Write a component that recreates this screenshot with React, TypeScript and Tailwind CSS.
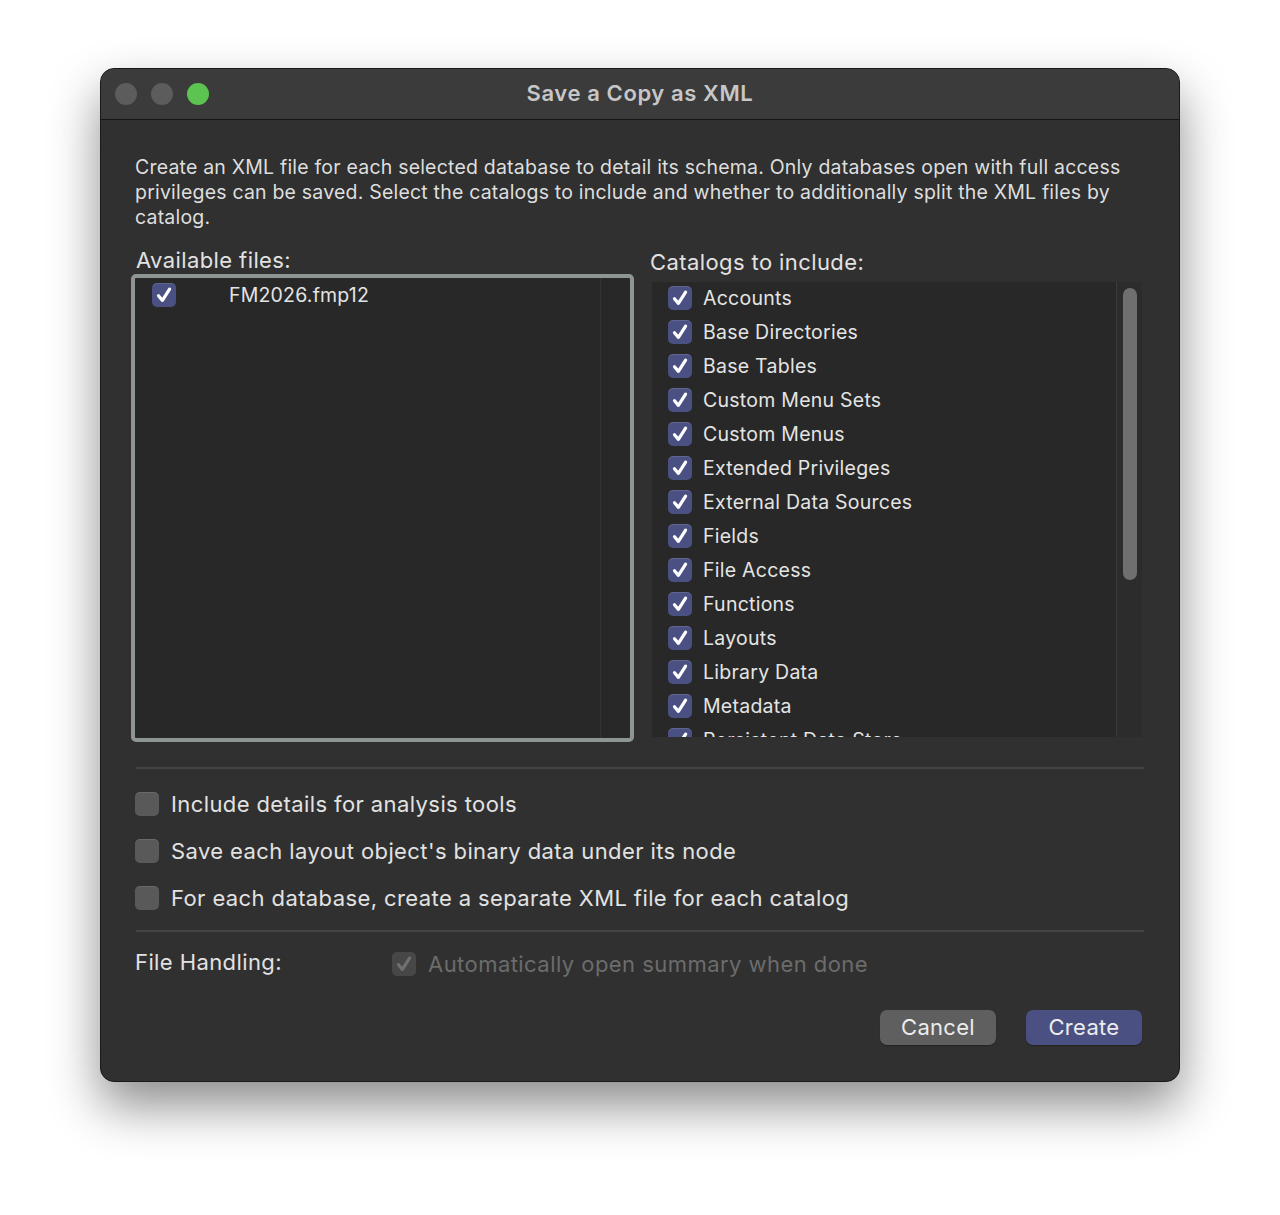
import React from "react";

const catalogs = [
  "Accounts",
  "Base Directories",
  "Base Tables",
  "Custom Menu Sets",
  "Custom Menus",
  "Extended Privileges",
  "External Data Sources",
  "Fields",
  "File Access",
  "Functions",
  "Layouts",
  "Library Data",
  "Metadata",
  "Persistent Data Store",
];

const options = [
  "Include details for analysis tools",
  "Save each layout object's binary data under its node",
  "For each database, create a separate XML file for each catalog",
];

function Check({ color = "#ffffff" }: { color?: string }) {
  return (
    <svg viewBox="0 0 24 24" className="w-6 h-6">
      <path d="M6.5 12.8l3.9 4.6L17.6 6.2" fill="none" stroke={color} strokeWidth="3.2" strokeLinecap="round" strokeLinejoin="round" />
    </svg>
  );
}

function Box({ checked, disabled }: { checked?: boolean; disabled?: boolean }) {
  if (disabled) {
    return (
      <span className="w-6 h-6 shrink-0 rounded-[5px] bg-[#474747] flex items-center justify-center">
        <Check color="#6f6f6f" />
      </span>
    );
  }
  if (checked) {
    return (
      <span className="w-6 h-6 shrink-0 rounded-[5px] bg-[#4b5083] shadow-[inset_0_1px_0_rgba(255,255,255,0.12)] flex items-center justify-center">
        <Check />
      </span>
    );
  }
  return <span className="w-6 h-6 shrink-0 rounded-[5px] bg-[#595959] shadow-[inset_0_1px_0_rgba(255,255,255,0.1)]" />;
}

export default function App() {
  return (
    <div className="w-[1280px] h-[1215px] bg-white pt-[68px]" style={{ fontFamily: "Inter, 'Noto Sans', sans-serif" }}>
      <div className="mx-auto w-[1080px] h-[1014px] rounded-[14px] bg-[#303030] border border-[#1a1a1a] shadow-[0_24px_50px_rgba(0,0,0,0.45)] overflow-hidden flex flex-col">
        <div className="relative h-[51px] shrink-0 bg-[#3b3b3b] border-b border-[#151515] flex items-center justify-center">
          <div className="absolute left-[14px] top-[14px] flex gap-[14px]">
            <span className="w-[22px] h-[22px] rounded-full bg-[#5c5c5c]" />
            <span className="w-[22px] h-[22px] rounded-full bg-[#5c5c5c]" />
            <span className="w-[22px] h-[22px] rounded-full bg-[#5cc451]" />
          </div>
          <span className="text-[22px] font-semibold text-[#c7c7c7] tracking-[0.6px] -mt-[2px]">Save a Copy as XML</span>
        </div>

        <div className="pl-[34px] pr-[37px] pt-[35px] flex flex-col">
          <p className="text-[19.5px] leading-[25px] tracking-[0.2px] text-[#dedede] pr-[14px]">
            Create an XML file for each selected database to detail its schema. Only databases open with full access privileges can be saved. Select the catalogs to include and whether to additionally split the XML files by catalog.
          </p>

          <div className="mt-[16px] flex">
            <div className="w-[503px] -ml-[4px] flex flex-col">
              <div className="pl-[5px] h-[29px] text-[22px] leading-[29px] tracking-[0.4px] text-[#e2e2e2]">Available files:</div>
              <div className="-mt-[1px] h-[468px] rounded-[5px] border-[4px] border-[#8d9694] bg-[#282828] flex">
                <div className="flex-1 flex flex-col">
                  <div className="h-[34px] flex items-center">
                    <span className="ml-[17px]"><Box checked /></span>
                    <span className="ml-[53px] mt-[1px] text-[19.5px] tracking-[0.2px] text-[#e4e4e4]">FM2026.fmp12</span>
                  </div>
                </div>
                <div className="w-[30px] border-l border-[#333333]" />
              </div>
            </div>

            <div className="ml-[16px] flex-1 flex flex-col">
              <div className="h-[29px] mt-[2px] text-[22px] leading-[29px] tracking-[0.4px] text-[#e2e2e2]">Catalogs to include:</div>
              <div className="mt-[5px] ml-[2px] h-[455px] bg-[#282828] flex overflow-hidden">
                <div className="flex-1 flex flex-col overflow-hidden">
                  {catalogs.map((c) => (
                    <div key={c} className="h-[34px] shrink-0 flex items-center pl-[16px] gap-[11px]">
                      <span className="-mt-[2px]"><Box checked /></span>
                      <span className="text-[19.5px] tracking-[0.25px] text-[#e4e4e4]">{c}</span>
                    </div>
                  ))}
                </div>
                <div className="w-[26px] bg-[#2c2c2c] border-l border-[#3a3a3a] flex justify-center pt-[6px]">
                  <div className="w-[14px] h-[292px] rounded-full bg-[#6f6f6f]" />
                </div>
              </div>
            </div>
          </div>

          <div className="mt-[25px] h-[2px] bg-[#444444] ml-[1px] mr-[-2px]" />

          <div className="mt-[23px] flex flex-col gap-[23px]">
            {options.map((o) => (
              <div key={o} className="h-[24px] flex items-center gap-[12px]">
                <Box />
                <span className="text-[22px] tracking-[0.4px] text-[#e2e2e2]">{o}</span>
              </div>
            ))}
          </div>

          <div className="mt-[20px] h-[2px] bg-[#444444] ml-[1px] mr-[-2px]" />

          <div className="mt-[18px] h-[28px] flex items-center">
            <span className="w-[257px] text-[22px] tracking-[0.4px] text-[#e2e2e2] -mt-[4px]">File Handling:</span>
            <Box disabled />
            <span className="ml-[12px] text-[22px] tracking-[0.45px] text-[#6c6c6c]">Automatically open summary when done</span>
          </div>

          <div className="mt-[32px] flex justify-end gap-[30px]">
            <button className="w-[116px] h-[35px] rounded-[7px] bg-[#5f5f5f] text-[22px] tracking-[0.3px] text-[#ececec] shadow-[0_1px_1px_rgba(0,0,0,0.3)]">Cancel</button>
            <button className="w-[116px] h-[35px] rounded-[7px] bg-[#4a5182] text-[22px] tracking-[0.3px] text-[#ececec] shadow-[0_1px_1px_rgba(0,0,0,0.3)]">Create</button>
          </div>
        </div>
      </div>
    </div>
  );
}
